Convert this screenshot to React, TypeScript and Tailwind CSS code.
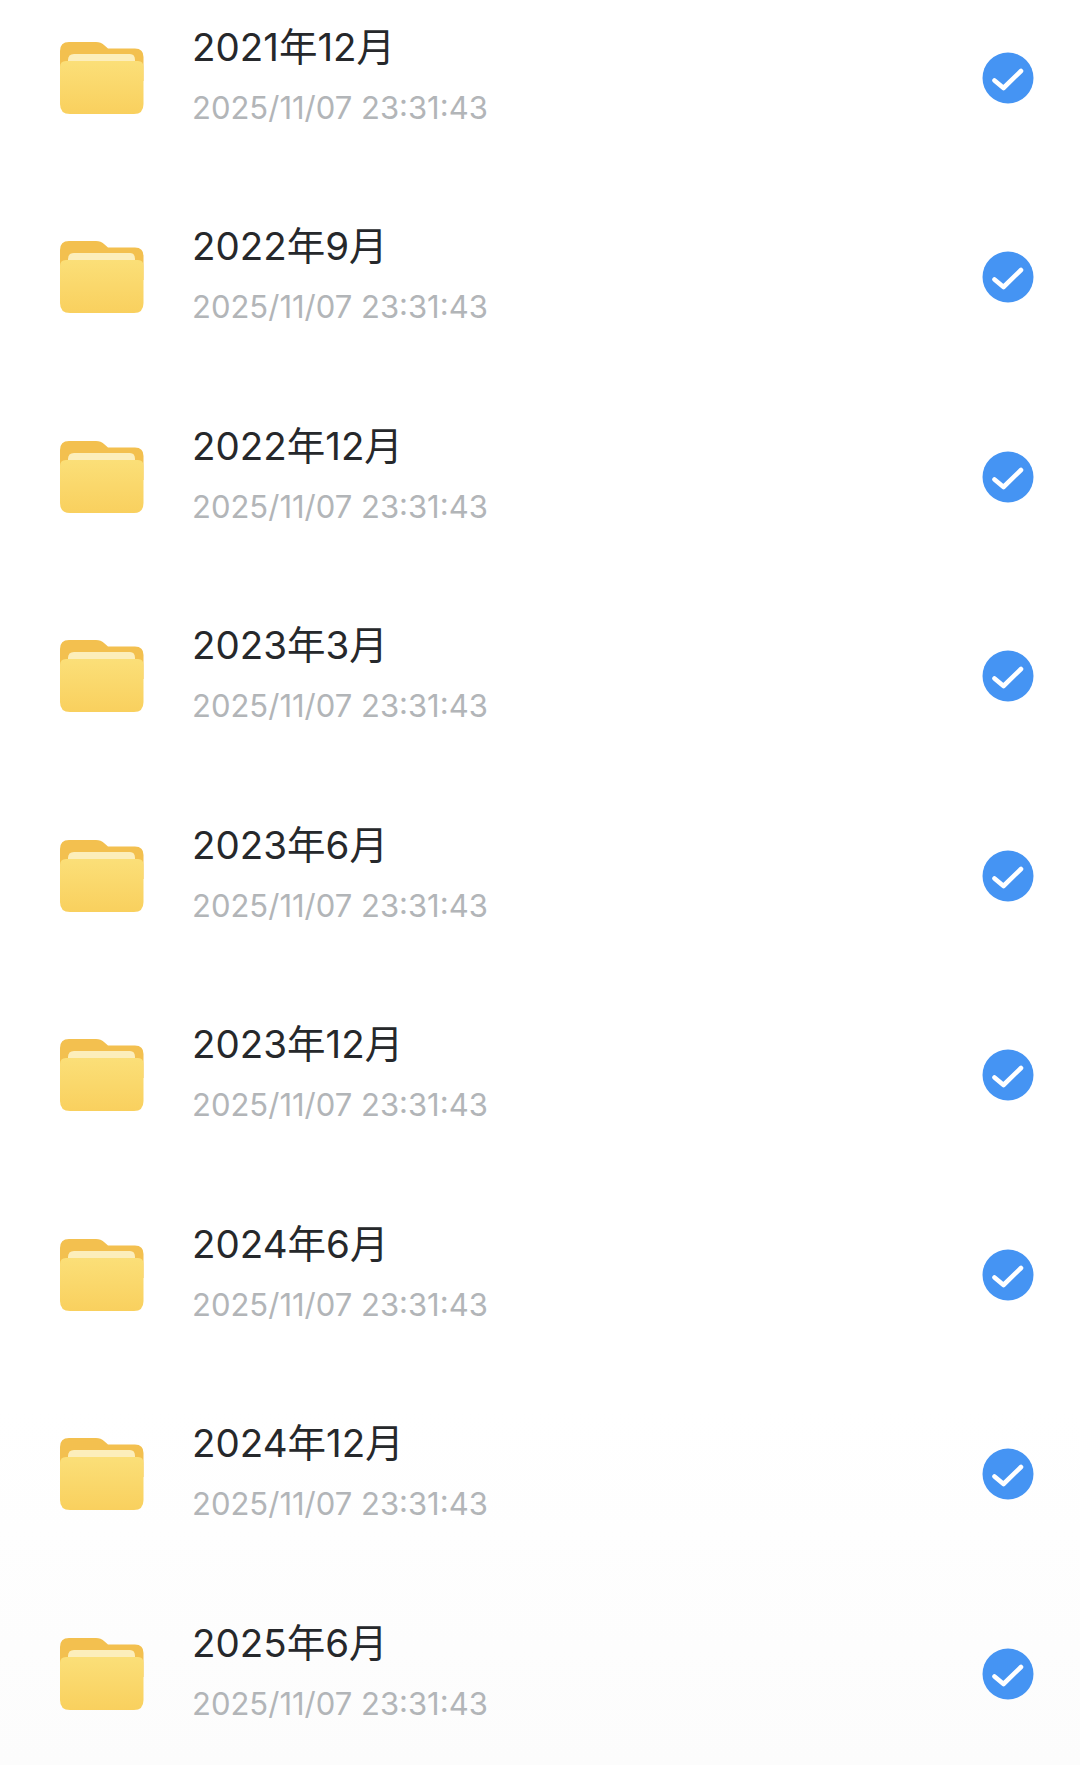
const titles = ["2021年12月", "2022年9月", "2022年12月", "2023年3月", "2023年6月", "2023年12月", "2024年6月", "2024年12月", "2025年6月"];

function Folder() {
  return (
    <svg width="84" height="74" viewBox="0 0 84 74" className="shrink-0">
      <defs>
        <linearGradient id="front" x1="0" y1="0" x2="0" y2="1">
          <stop offset="0" stopColor="#fbdf78" />
          <stop offset="1" stopColor="#f9d05e" />
        </linearGradient>
      </defs>
      <path d="M0 10 Q0 1 9 1 H36 Q41 1 44 4 L48 7.5 H75 Q83.5 7.5 83.5 16 V40 H0 Z" fill="#f3c04f" />
      <path d="M8 19 Q8 13 14 13 H70 Q75 13 75 19 V24 H8 Z" fill="#fceebb" />
      <path d="M0 26 Q0 20 6 20 H78 Q83.5 20 83.5 26 V63 Q83.5 73 74 73 H10 Q0 73 0 63 Z" fill="url(#front)" />
    </svg>
  );
}

function Check() {
  return (
    <svg width="52" height="52" viewBox="0 0 52 52" className="shrink-0">
      <circle cx="26" cy="26" r="25.5" fill="#4594f3" />
      <path d="M12.5 28.5 L21.5 36 L39 19" fill="none" stroke="#ffffff" strokeWidth="4.6" strokeLinecap="round" strokeLinejoin="round" />
    </svg>
  );
}

function Row({ title }: { title: string }) {
  return (
    <div className="flex h-[199.5px] shrink-0 items-center pl-[60px] pr-[46px]">
      <Folder />
      <div className="ml-[48px] flex flex-1 flex-col">
        <div className="text-[38.5px] leading-[50px] font-normal text-[#26282b] -mt-[1px]">{title}</div>
        <div className="mt-[11px] text-[31px] leading-[50px] text-[#b2b5b8]">2025/11/07 23:31:43</div>
      </div>
      <Check />
    </div>
  );
}

export default function App() {
  return (
    <div className="h-[1765px] w-[1080px] overflow-hidden bg-gradient-to-b from-white from-[80%] to-[#fcfcfc] font-['Inter','Noto_Sans_CJK_SC',sans-serif]">
      <div className="-mt-[22px] flex flex-col">
        {titles.map((t, i) => (
          <Row key={i} title={t} />
        ))}
      </div>
    </div>
  );
}
